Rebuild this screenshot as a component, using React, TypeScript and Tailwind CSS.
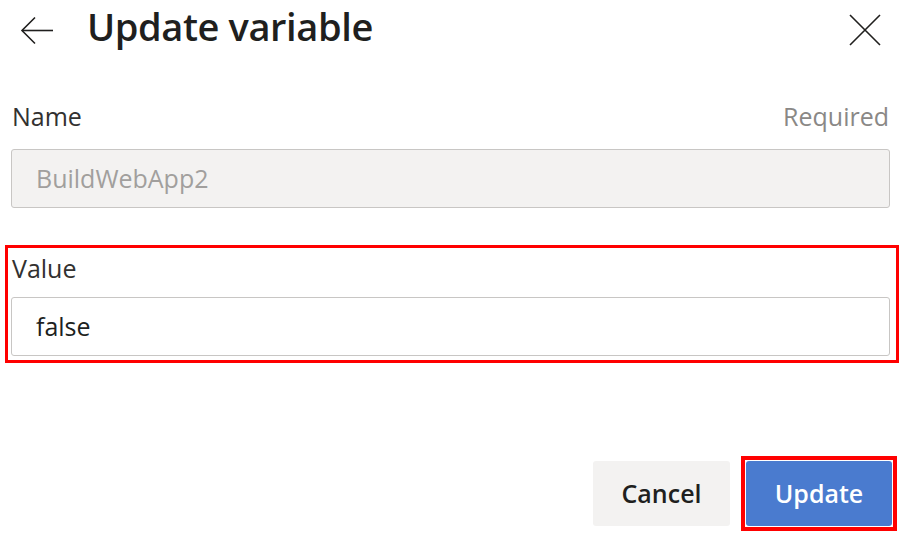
export default function App() {
  return (
    <div
      className="w-[905px] h-[538px] bg-white overflow-hidden text-[#323130] flex flex-col"
      style={{ fontFamily: '"Segoe UI", "Open Sans", "Noto Sans", sans-serif' }}
    >
      {/* header */}
      <div className="flex items-center h-[60px] pt-[2px]">
        <svg width="34" height="30" viewBox="0 0 34 30" className="ml-[20px]" fill="none" stroke="#201f1e" strokeWidth="1.6">
          <path d="M2 14.5 H33" />
          <path d="M15 1.5 L2 14.5 L15 27.5" />
        </svg>
        <h1 className="ml-[33px] mb-[10px] text-[38px] font-semibold leading-none text-[#201f1e] tracking-[-0.4px]">Update variable</h1>
        <svg width="32" height="32" viewBox="0 0 32 32" className="ml-auto mr-[24px] mb-[2px]" fill="none" stroke="#201f1e" strokeWidth="1.6">
          <path d="M1 1 L31 31 M31 1 L1 31" />
        </svg>
      </div>

      {/* name */}
      <div className="flex justify-between items-end mt-[40px] pl-[12px] pr-[16px] text-[25px] leading-[32px]">
        <span>Name</span>
        <span className="text-[#8a8886]">Required</span>
      </div>
      <div className="ml-[11px] mr-[15px] mt-[17px] h-[59px] flex items-center pl-[24px] bg-[#f3f2f1] border border-[#c8c6c4] rounded-[3px] text-[25px] text-[#a19f9d]">
        BuildWebApp2
      </div>

      {/* value, highlighted */}
      <div className="ml-[5px] w-[894px] mt-[37px] border-[3px] border-[#ff0000] pl-[3px] pr-[6px] pt-[4px] pb-[4px]">
        <div className="text-[25px] leading-[32px] pl-[1px]">Value</div>
        <div className="mt-[13px] h-[59px] flex items-center pl-[24px] bg-white border border-[#c8c6c4] rounded-[3px] text-[25px] text-[#201f1e]">
          false
        </div>
      </div>

      {/* actions */}
      <div className="flex justify-end items-center mt-[93px] pr-[8px] gap-[11px]">
        <button className="w-[137px] h-[65px] bg-[#f3f2f1] rounded-[3px] text-[25px] font-semibold text-[#201f1e]">Cancel</button>
        <div className="border-[4px] border-[#ff0000] p-[1px]">
          <button className="w-[146px] h-[65px] bg-[#4a7bcf] rounded-[3px] text-[25px] font-semibold text-white">Update</button>
        </div>
      </div>
    </div>
  );
}
